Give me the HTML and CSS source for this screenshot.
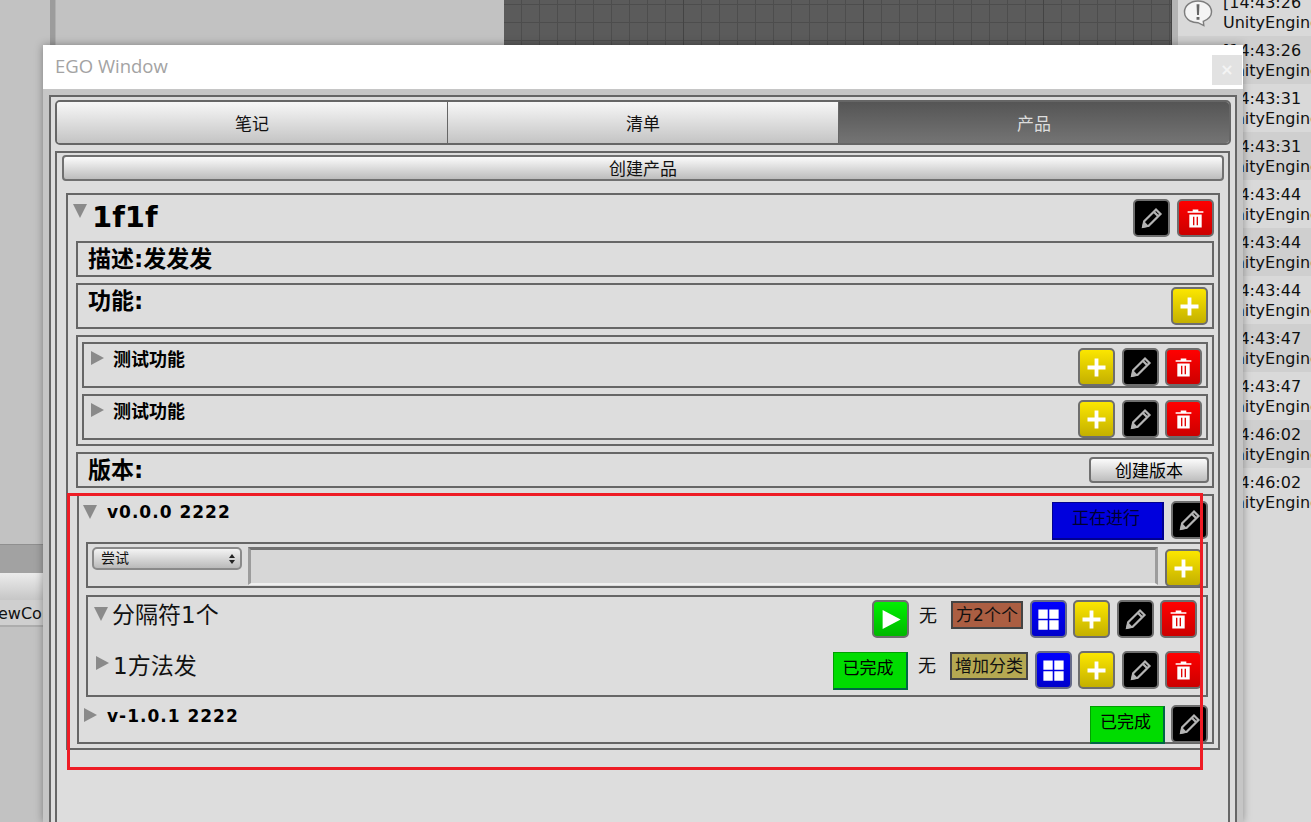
FILE: index.html
```html
<!DOCTYPE html>
<html lang="en">
<head>
  <meta charset="UTF-8" />
  <title>EGO Window</title>
  <link rel="stylesheet" href="styles.css">
</head>
<body>
  <svg class="defs" width="0" height="0">
    <symbol id="i-pen" viewBox="0 0 24 24"><path d="M4.500 19.500l1-5L16 4l4 4L9.500 18.500z M14 6l4 4" fill="none" stroke="#b4b4b4" stroke-width="2"/><path d="M3.500 20.500l1.500-6.500 5 5z" fill="#b4b4b4"/></symbol>
    <symbol id="i-bin" viewBox="0 0 24 24"><path d="M5 5.500h14v1.300H5z M9.500 4h5v1.500h-5z" fill="#fff"/><path fill-rule="evenodd" d="M6.500 8.500h11V20h-11z M9.800 10.500v7.500H11v-7.500z M13 10.500v7.500h1.200v-7.500z" fill="#fff"/></symbol>
    <symbol id="i-plus" viewBox="0 0 24 24"><path d="M10.300 4h3.400v6.300H20v3.400h-6.300V20h-3.400v-6.300H4v-3.400h6.300z" fill="#fff"/></symbol>
    <symbol id="i-play" viewBox="0 0 24 24"><path d="M5 3.500L21 12 5 20.500z" fill="#fff"/></symbol>
    <symbol id="i-grid" viewBox="0 0 24 24"><path d="M3 3h8.300v8.300H3z M12.700 3H21v8.300h-8.300z M3 12.700h8.300V21H3z M12.700 12.700H21V21h-8.300z" fill="#fff"/></symbol>
  </svg>

  <div class="desk">
    <div class="pane-left">
      <div class="splitter"></div>
      <div class="strip-dark"></div>
      <div class="strip-light"></div>
      <div class="strip-label"><span>ewCon</span></div>
    </div>
    <div class="pane-scene"></div>
    <div class="pane-console">
      <div class="log-row"><svg class="log-icon" viewBox="0 0 30 28"><path d="M15 1C7 1 1 6 1 12.500c0 4 2.400 7.300 6 9.300 3 1.500 6 1.700 8 1.700l6 3-.5-4.400C25.800 20 29 16.800 29 12.500 29 6 23 1 15 1z" fill="#f4f4f4" stroke="#7d7d7d" stroke-width="1.500"/><path d="M13.500 4.500h3l-.5 11h-2z M13.500 17.500h3v3h-3z" fill="#666"/></svg><p>[14:43:26<br>UnityEngine</p></div>
      <div class="log-row alt"><p>[14:43:26<br>UnityEngine</p></div>
      <div class="log-row"><p>[14:43:31<br>UnityEngine</p></div>
      <div class="log-row alt"><p>[14:43:31<br>UnityEngine</p></div>
      <div class="log-row"><p>[14:43:44<br>UnityEngine</p></div>
      <div class="log-row alt"><p>[14:43:44<br>UnityEngine</p></div>
      <div class="log-row"><p>[14:43:44<br>UnityEngine</p></div>
      <div class="log-row alt"><p>[14:43:47<br>UnityEngine</p></div>
      <div class="log-row"><p>[14:43:47<br>UnityEngine</p></div>
      <div class="log-row alt"><p>[14:46:02<br>UnityEngine</p></div>
      <div class="log-row"><p>[14:46:02<br>UnityEngine</p></div>
    </div>
  </div>

  <div class="window">
    <div class="titlebar"><span class="title">EGO Window</span><span class="close">×</span></div>
    <div class="win-body">
      <div class="tabs">
        <div class="tab">笔记</div>
        <div class="tab">清单</div>
        <div class="tab on">产品</div>
      </div>
      <div class="tab-panel">
        <div class="btn-create">创建产品</div>
        <div class="product">
          <div class="product-head">
            <i class="tri down"></i><h1>1f1f</h1>
            <div class="tools">
              <span class="ib black"><svg><use href="#i-pen"/></svg></span>
              <span class="ib red"><svg><use href="#i-bin"/></svg></span>
            </div>
          </div>
          <div class="box line">描述:发发发</div>
          <div class="box line tall">功能:
            <div class="tools"><span class="ib yellow"><svg><use href="#i-plus"/></svg></span></div>
          </div>
          <div class="box feats">
            <div class="box feat">
              <i class="tri right"></i><b>测试功能</b>
              <div class="tools">
                <span class="ib yellow"><svg><use href="#i-plus"/></svg></span>
                <span class="ib black"><svg><use href="#i-pen"/></svg></span>
                <span class="ib red"><svg><use href="#i-bin"/></svg></span>
              </div>
            </div>
            <div class="box feat">
              <i class="tri right"></i><b>测试功能</b>
              <div class="tools">
                <span class="ib yellow"><svg><use href="#i-plus"/></svg></span>
                <span class="ib black"><svg><use href="#i-pen"/></svg></span>
                <span class="ib red"><svg><use href="#i-bin"/></svg></span>
              </div>
            </div>
          </div>
          <div class="box line">版本:
            <div class="btn-version">创建版本</div>
          </div>
          <div class="box versions">
            <div class="ver-row">
              <i class="tri down"></i><b class="ver-name">v0.0.0 2222</b>
              <div class="tools">
                <span class="status blue">正在进行</span>
                <span class="ib black"><svg><use href="#i-pen"/></svg></span>
              </div>
            </div>
            <div class="box add-row">
              <div class="select">尝试<i class="arrows"></i></div>
              <div class="input"></div>
              <span class="ib yellow"><svg><use href="#i-plus"/></svg></span>
            </div>
            <div class="box methods">
              <div class="method first">
                <i class="tri down"></i><span class="method-name">分隔符1个</span>
                <div class="tools">
                  <span class="ib green"><svg><use href="#i-play"/></svg></span>
                  <span class="none">无</span>
                  <span class="tag brown">方2个个</span>
                  <span class="ib blue-b"><svg><use href="#i-grid"/></svg></span>
                  <span class="ib yellow"><svg><use href="#i-plus"/></svg></span>
                  <span class="ib black"><svg><use href="#i-pen"/></svg></span>
                  <span class="ib red"><svg><use href="#i-bin"/></svg></span>
                </div>
              </div>
              <div class="method second">
                <i class="tri right"></i><span class="method-name">1方法发</span>
                <div class="tools">
                  <span class="status lime">已完成</span>
                  <span class="none">无</span>
                  <span class="tag olive">增加分类</span>
                  <span class="ib blue-b"><svg><use href="#i-grid"/></svg></span>
                  <span class="ib yellow"><svg><use href="#i-plus"/></svg></span>
                  <span class="ib black"><svg><use href="#i-pen"/></svg></span>
                  <span class="ib red"><svg><use href="#i-bin"/></svg></span>
                </div>
              </div>
            </div>
            <div class="ver-row last">
              <i class="tri right"></i><b class="ver-name">v-1.0.1 2222</b>
              <div class="tools">
                <span class="status lime">已完成</span>
                <span class="ib black"><svg><use href="#i-pen"/></svg></span>
              </div>
            </div>
          </div>
        </div>
      </div>
    </div>
  </div>

  <div class="markup"></div>
</body>
</html>
```
FILE: styles.css
```css
*{margin:0;padding:0;box-sizing:border-box}
html,body{height:100%;overflow:hidden}
body{font-family:"DejaVu Sans","Noto Sans CJK SC",sans-serif;color:#111;background:#c2c2c2}
.defs{position:absolute}

/* editor behind the window */
.desk{display:flex;height:822px}
.pane-left{width:504px;background:#c2c2c2;position:relative}
.splitter{position:absolute;left:50px;top:0;width:6px;height:45px;background:#9c9c9c;border-right:1px solid #b0b0b0}
.strip-dark{margin-top:544px;height:29px;background:#a2a2a2;border-top:1px solid #8f8f8f}
.strip-light{height:27px;background:linear-gradient(#ececec,#c6c6c6)}
.strip-label{width:43px;height:27px;overflow:hidden;font-size:16px;line-height:27px;white-space:nowrap;background:#cfcfcf;border-bottom:2px solid #adadad}
.strip-label span{margin-left:-2px;display:block}
.pane-scene{width:668px;background-color:#5b5b5b;background-image:linear-gradient(90deg,#444 1px,transparent 1px),linear-gradient(#4d4d4d 1px,transparent 1px),linear-gradient(90deg,#4d4d4d 1px,transparent 1px);background-size:180px 180px,18px 18px,18px 18px;background-position:179px 0,0 4px,17px 0;border-right:1px solid #444}
.pane-console{flex:1;background:#d9d9d9;border-left:6px solid #b4b4b4;overflow:hidden;margin-top:-12px}
.log-row{height:48px;padding:5px 0 0 45px;position:relative;font-size:16px;line-height:20px;white-space:nowrap;overflow:hidden}
.log-row.alt{background:#cfcfcf}
.log-icon{position:absolute;left:5px;top:12px;width:30px;height:27px}

/* the floating window */
.window{position:absolute;left:43px;top:45px;width:1200px;height:777px;background:#c6c6c6;box-shadow:0 0 8px rgba(0,0,0,.35);display:flex;flex-direction:column}
.titlebar{height:44px;background:#fff;flex:none;display:flex;align-items:center;padding:0 0 3px 12px;position:relative}
.title{font-family:"Open Sans",sans-serif;font-size:18.500px;color:#a3a3a3}
.close{position:absolute;right:1px;top:10px;width:30px;height:30px;background:#e2e2e2;color:#f4f4f4;font-size:16px;font-weight:bold;line-height:30px;text-align:center}
.win-body{flex:1;margin:6px 6px 0;border:2px solid #666;border-bottom:none;background:#ddd;padding:3px 5px 0 4px;overflow:hidden}

.tabs{display:flex;height:45px;margin-right:-1px;border:2px solid #666;border-radius:5px;overflow:hidden}
.tab{flex:1;display:flex;align-items:center;justify-content:center;font-size:17px;padding-bottom:1px;background:linear-gradient(#f7f7f7,#c4c4c4);border-left:1px solid #666}
.tab:first-child{border-left:none}
.tab.on{background:linear-gradient(#555,#747474);color:#ddd}

.tab-panel{margin-top:6px;height:700px;border:2px solid #666;border-bottom:none;padding:2px 4px 0 5px}
.btn-create{height:26px;border:2px solid #707070;border-radius:4px;background:linear-gradient(#fbfbfb,#bdbdbd);text-align:center;font-size:17px;line-height:24px}

/* disclosure triangles */
.tri{display:block;flex:none;width:0;height:0}
.tri.down{border-left:7px solid transparent;border-right:7px solid transparent;border-top:14px solid #8a8a8a;margin-top:9px}
.tri.right{border-top:7px solid transparent;border-bottom:7px solid transparent;border-left:13px solid #8a8a8a}

.product{margin:12px 4px 0 4px;height:557px;border:2px solid #666;padding:0 4px 0 8px}
.product-head{height:46px;display:flex;position:relative}
.product-head h1{font-size:29px;line-height:44px;font-weight:bold;margin-left:5px;color:#000}
.product-head .tri{margin-left:-3px}
.product-head .tools{align-self:flex-start;margin-top:4px;gap:7px}
.tools{display:flex;align-items:center;margin-left:auto;gap:6.500px}

.box{border:2px solid #666}
.line{height:36px;display:flex;align-items:center;padding:0 0 4px 10px;font-size:23px;font-weight:bold;color:#000;margin-bottom:6px}
.line.tall{height:46px;align-items:flex-start;line-height:32px;padding:0 4px 0 10px}
.line .btn-version{margin-left:auto;margin-right:3px;margin-top:4px;width:120px;height:26px;border:2px solid #707070;border-radius:4px;background:linear-gradient(#fbfbfb,#bdbdbd);text-align:center;font-size:17px;font-weight:normal;line-height:24px}
.line.tall .tools{margin-top:2px}

.feats{height:111px;padding:5px 4px 0;margin-bottom:6px}
.feat{height:46px;display:flex;padding:4px 4px 0 7px;margin-bottom:6px}
.feat .tri{margin-top:3px}
.feat b{font-size:18px;line-height:24px;margin-left:9px;color:#000}

.versions{height:250px;margin-left:1px;padding:0 4px 0 7px}
.ver-row{height:46px;display:flex;padding:4px 0 0 0}
.ver-name{font-size:17px;line-height:24px;margin-left:10px;letter-spacing:1px;color:#000}
.ver-row .tools{align-self:flex-start;gap:7px}
.ver-row .tri{margin-top:5px;margin-left:-3px}
.ver-row .status{margin-top:2px}
.ver-row.last{padding-top:7px}
.ver-row.last .tri{margin-top:4px;margin-left:-2px}
.ver-row.last .tools{gap:6px}

.add-row{height:46px;display:flex;align-items:flex-start;padding:1px 4px 0 4px}
.add-row .ib{margin-top:4px;margin-left:7px}
.select{width:150px;height:23px;border:2px solid #8a8a8a;border-radius:5px;background:linear-gradient(#f4f4f4,#bababa);font-size:14px;line-height:19px;padding-left:7px;position:relative;margin-top:2px}
.arrows{position:absolute;right:5px;top:5px;width:6px;height:10px}
.arrows::before,.arrows::after{content:"";position:absolute;left:0;border-left:3px solid transparent;border-right:3px solid transparent}
.arrows::before{top:0;border-bottom:4px solid #222}
.arrows::after{bottom:0;border-top:4px solid #222}
.input{flex:1;height:38px;margin-left:6px;margin-top:2px;background:#d7d7d7;border:3px solid #9c9c9c;border-top-color:#707070;border-bottom:2px solid #f0f0f0}

.methods{height:102px;margin-top:7px;padding:0 3px 0 5px}
.method{height:50px;display:flex}
.method.first{padding:3px 6px 0 1px}
.method.second{padding:3px 1px 0 3px}
.method.first .tri{margin-top:7px}
.method.second .tri{margin-top:6px}
.method-name{font-size:23px;line-height:29px;margin:1px 0 0 4px;color:#111}
.method.second .method-name{margin-top:2px}
.method .tools{align-self:flex-start}
.method .status{margin-top:2px}

/* square icon buttons */
.ib{flex:none;width:37px;height:38px;border:2px solid #6e6e6e;border-radius:5px;display:flex;align-items:center;justify-content:center}
.ib svg{width:27px;height:27px}
.ib.black{background:#000}
.ib.red{background:linear-gradient(#f00,#c00)}
.ib.yellow{background:linear-gradient(#fbe600,#c4b000)}
.ib.green{background:linear-gradient(#00f000,#00b800)}
.ib.blue-b{background:linear-gradient(#00f,#00c);border-color:#666a88}

.status{flex:none;width:75px;height:38px;border:1px solid #00a000;border-right:2px solid #064;border-bottom:2px solid #064;padding-right:3px;font-size:17px;line-height:31px;text-align:center;color:#000}
.status.lime{background:#00dc00}
.status.blue{width:112px;background:#0000dd;border-color:#000090;color:#000030}
.none{font-size:18px;line-height:22px;width:18px;margin:5px 7.500px 0 4px;text-align:center;align-self:flex-start}
.tag{flex:none;align-self:flex-start;height:28px;border:2px solid #444;font-size:17px;line-height:24px;text-align:center;color:#111;white-space:nowrap}
.method.first .tag{margin-top:1px}
.method.second .tag{margin-top:2px}
.tag.brown{background:#ab5e42;width:72px}
.tag.olive{background:#b5a852;width:78px}

/* red annotation drawn over the screenshot */
.markup{position:absolute;left:67px;top:493px;width:1136px;height:277px;border:3px solid #ee1c25;pointer-events:none}
```
